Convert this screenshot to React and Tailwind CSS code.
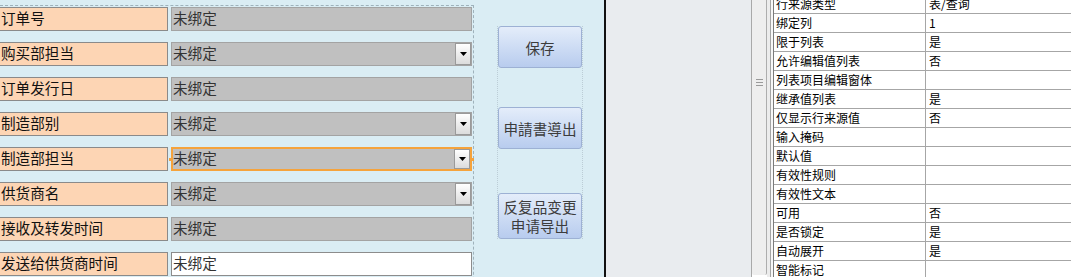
const FORM_ROWS = [
  { label: '订单号', kind: 'text' },
  { label: '购买部担当', kind: 'combo' },
  { label: '订单发行日', kind: 'text' },
  { label: '制造部别', kind: 'combo' },
  { label: '制造部担当', kind: 'combo', focused: true },
  { label: '供货商名', kind: 'combo' },
  { label: '接收及转发时间', kind: 'text' },
  { label: '发送给供货商时间', kind: 'white' },
];

const PROPS = [
  ['行来源类型', '表/查询'],
  ['绑定列', '1'],
  ['限于列表', '是'],
  ['允许编辑值列表', '否'],
  ['列表项目编辑窗体', ''],
  ['继承值列表', '是'],
  ['仅显示行来源值', '否'],
  ['输入掩码', ''],
  ['默认值', ''],
  ['有效性规则', ''],
  ['有效性文本', ''],
  ['可用', '否'],
  ['是否锁定', '是'],
  ['自动展开', '是'],
  ['智能标记', ''],
];

const FONT = { fontFamily: '"Noto Sans CJK SC", "Noto Sans", sans-serif' };

function DropButton() {
  return (
    <div className="absolute right-0 top-0 bottom-0 w-[16px] border border-[#9a9a9a] bg-gradient-to-b from-[#ffffff] to-[#dcdcdc] flex items-center justify-center">
      <svg width="7" height="4" viewBox="0 0 7 4">
        <path d="M0 0h7L3.5 4z" fill="#000" />
      </svg>
    </div>
  );
}

function FormRow({ row }) {
  const field =
    row.kind === 'white'
      ? 'bg-white border border-[#8c8c8c]'
      : row.focused
      ? 'bg-[#c0c0c0] border-2 border-[#f5a33c]'
      : 'bg-[#c0c0c0] border border-[#a3a3a3]';
  return (
    <div className="flex h-[24px] gap-[3px]">
      <div className="w-[168px] bg-[#fdd5b4] border-y border-r border-[#8a8a8a] flex items-center pl-[1px] pb-[1px] text-[14.6px] text-[#111] leading-none">
        {row.label}
      </div>
      <div className={`relative w-[301px] flex items-center pl-[1px] pb-[1px] text-[14.6px] text-[#333] leading-none ${field}`}>
        <span className={row.focused ? '-ml-[1px]' : ''}>未绑定</span>
        {row.kind === 'combo' && <DropButton />}
        {row.focused && (
          <>
            <div className="absolute -left-[4px] top-[9px] w-[3px] h-[3px] bg-[#f5a33c]" />
            <div className="absolute -right-[4px] top-[9px] w-[3px] h-[3px] bg-[#f5a33c]" />
          </>
        )}
      </div>
    </div>
  );
}

function Btn({ children, h }) {
  return (
    <div
      className={`${h} w-full rounded-[3px] border border-[#9db1d4] bg-gradient-to-b from-[#e4edfa] to-[#b8ccee] flex flex-col items-center justify-center text-[14.6px] text-[#3c3c3c] leading-[19px]`}
    >
      {children}
    </div>
  );
}

export default function App() {
  return (
    <div className="flex h-[277px] w-[1071px] overflow-hidden bg-white" style={FONT}>
      {/* form area */}
      <div className="w-[604px] shrink-0 bg-[#daedf4] flex">
        <div className="mt-[5px] w-[474px] h-[300px] border-t border-r border-dashed border-[#9fb2bb] pt-[1px] flex flex-col gap-[11px]">
          {FORM_ROWS.map((r) => (
            <FormRow key={r.label} row={r} />
          ))}
        </div>
        <div className="ml-[23px] mt-[26px] w-[86px] h-[213px] border-x border-dotted border-[#bccdd6] flex flex-col">
          <Btn h="h-[42px]">保存</Btn>
          <div className="h-[39px]" />
          <Btn h="h-[42px]">申請書導出</Btn>
          <div className="h-[44px]" />
          <Btn h="h-[46px]">
            <span>反复品变更</span>
            <span>申请导出</span>
          </Btn>
        </div>
      </div>
      <div className="w-[2px] shrink-0 bg-[#111]" />

      {/* gray design area */}
      <div className="w-[146px] shrink-0 bg-[#e9ecef] border-r border-[#a9a9a9]" />

      {/* splitter / scroll thumb */}
      <div className="w-[15px] shrink-0 bg-[#eeeeee] border-r border-[#adadad] h-[275px] rounded-b-[2px] flex items-start justify-center pt-[79px]">
        <div className="flex flex-col gap-[2px] w-[7px]">
          <div className="h-[1px] bg-[#9a9a9a]" />
          <div className="h-[1px] bg-[#9a9a9a]" />
          <div className="h-[1px] bg-[#9a9a9a]" />
        </div>
      </div>
      <div className="w-[4px] shrink-0 bg-[#ececec] border-r border-[#a5a5a5]" />
      <div className="w-[3px] shrink-0 bg-[#f7f7f7] border-r border-[#7a7a7a]" />

      {/* property sheet */}
      <div className="flex-1 bg-white -mt-[5px]">
        {PROPS.map(([k, v]) => (
          <div key={k} className="flex h-[19px] border-b border-[#a6a6a6] text-[12px] text-black leading-none">
            <div className="w-[152px] shrink-0 border-r border-[#a6a6a6] flex items-center pl-[2px]">{k}</div>
            <div className="flex-1 flex items-center pl-[3px]">{v}</div>
          </div>
        ))}
      </div>
    </div>
  );
}
